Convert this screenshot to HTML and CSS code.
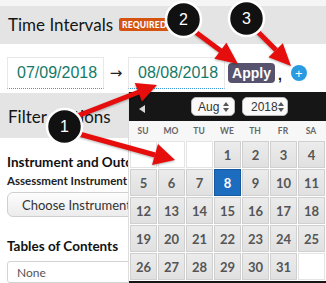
FILE: index.html
```html
<!DOCTYPE html>
<html lang="en">
<head>
  <meta charset="UTF-8" />
  <title>Time Intervals</title>
  <link rel="stylesheet" href="styles.css">
</head>
<body>
  <div class="page">
    <div class="strip"></div>

    <section class="panel">
      <h2 class="panel-title">Time Intervals <span class="badge">REQUIRED</span></h2>
      <div class="range">
        <div class="date">07/09/2018</div>
        <span class="to">&rarr;</span>
        <div class="date">08/08/2018</div>
        <button type="button" class="apply">Apply</button>
        <span class="comma">,</span>
        <span class="add">+</span>
      </div>
    </section>

    <section class="panel">
      <h2 class="panel-title filter-title">Filter Options</h2>
      <div class="filters">
        <h3>Instrument and Outcomes</h3>
        <label>Assessment Instrument</label>
        <button type="button" class="choose">Choose Instrument</button>
        <h3 class="toc">Tables of Contents</h3>
        <div class="select">None</div>
      </div>
    </section>

    <div class="datepicker">
      <div class="dp-head">
        <span class="dp-prev"></span>
        <span class="dp-select month">Aug <svg width="6" height="10" viewBox="0 0 6 10"><path d="M3 0 L6 4 H0 Z M0 6 H6 L3 10 Z" fill="#555"/></svg></span>
        <span class="dp-select year">2018 <svg width="6" height="10" viewBox="0 0 6 10"><path d="M3 0 L6 4 H0 Z M0 6 H6 L3 10 Z" fill="#555"/></svg></span>
      </div>
      <div class="dp-days">
        <span>SU</span><span>MO</span><span>TU</span><span>WE</span><span>TH</span><span>FR</span><span>SA</span>
      </div>
      <div class="dp-grid">
        <span class="empty"></span><span class="empty"></span><span class="empty"></span>
        <span>1</span><span>2</span><span>3</span><span>4</span>
        <span>5</span><span>6</span><span>7</span><span class="active">8</span><span>9</span><span>10</span><span>11</span>
        <span>12</span><span>13</span><span>14</span><span>15</span><span>16</span><span>17</span><span>18</span>
        <span>19</span><span>20</span><span>21</span><span>22</span><span>23</span><span>24</span><span>25</span>
        <span>26</span><span>27</span><span>28</span><span>29</span><span>30</span><span>31</span><span class="empty"></span>
      </div>
      <div class="dp-foot"></div>
    </div>

    <svg class="notes" width="326" height="283" viewBox="0 0 326 283">
      <g class="arrows">
        <line x1="72" y1="118" x2="139" y2="92" />
        <polygon points="142,101.5 157,85 134.8,82.9" />
        <line x1="72" y1="132" x2="155" y2="155" />
        <polygon points="152,165 175,160 158,144" />
        <line x1="190" y1="28" x2="221" y2="51" />
        <polygon points="214.4,58.8 238,64 226.4,42.8" />
        <line x1="252" y1="26" x2="276" y2="50" />
        <polygon points="268.5,57.2 291,66 282.8,43.2" />
      </g>
      <g class="marks">
        <circle cx="64.5" cy="126.5" r="17.5" />
        <text x="64.5" y="132">1</text>
        <circle cx="183.5" cy="19.5" r="17.5" />
        <text x="183.5" y="25">2</text>
        <circle cx="246.5" cy="18.5" r="17.5" />
        <text x="246.5" y="24">3</text>
      </g>
    </svg>
  </div>
</body>
</html>
```

FILE: styles.css
```css
* {
  box-sizing: border-box;
  margin: 0;
  padding: 0;
}

body {
  background-color: #fff;
  color: #111;
  font-family: 'Lato', sans-serif;
}

.page {
  position: relative;
  width: 326px;
  height: 283px;
  overflow: hidden;
}

.strip {
  height: 6px;
  background-color: #f5f5f5;
}

.panel-title {
  display: flex;
  align-items: center;
  height: 38px;
  padding: 0 8px 2px;
  background-color: #e4e4e4;
  font-size: 17px;
  font-weight: 400;
  color: #151515;
}

.filter-title {
  height: 45px;
  padding-top: 4px;
}

.badge {
  margin-left: 6px;
  padding: 2px 3px 1px;
  border-radius: 2px;
  background-color: #d4530f;
  color: #fff;
  font-size: 8.5px;
  font-weight: 900;
  letter-spacing: 0.2px;
}

.range {
  display: flex;
  align-items: center;
  height: 49px;
  padding: 13px 0 4px 7px;
}

.date {
  width: 97px;
  height: 32px;
  padding: 6px 0 0 9px;
  border: 1px solid #e8e8e8;
  border-bottom: 1px dotted #3c9ad8;
  font-family: 'Liberation Sans', sans-serif;
  font-size: 16px;
  color: #167a68;
}

.to {
  width: 24px;
  text-align: center;
  font-family: 'DejaVu Sans', sans-serif;
  font-size: 15px;
  color: #222;
}

.apply {
  margin-left: 3px;
  width: 47px;
  height: 20px;
  border: none;
  border-radius: 4px;
  background-color: #57536e;
  color: #fff;
  font-family: 'Liberation Sans', sans-serif;
  font-size: 14px;
  font-weight: 700;
}

.comma {
  margin: 4px 0 0 3px;
  font-family: 'Liberation Sans', sans-serif;
  font-weight: 700;
  font-size: 14px;
}

.add {
  display: flex;
  align-items: center;
  justify-content: center;
  width: 16px;
  height: 16px;
  margin-left: 9px;
  border-radius: 50%;
  background-color: #2b9be1;
  color: #fff;
  font-family: 'Liberation Sans', sans-serif;
  font-size: 13px;
  line-height: 1;
}

.filters {
  padding: 16px 7px 0;
}

.filters h3 {
  font-size: 13.5px;
  font-weight: 700;
  color: #111;
}

.filters label {
  display: block;
  margin-top: 4px;
  font-size: 11.5px;
  font-weight: 700;
  color: #222;
}

.choose {
  display: block;
  width: 170px;
  height: 25px;
  margin-top: 5px;
  padding-left: 14px;
  text-align: left;
  border: 1px solid #cfcfcf;
  border-radius: 6px;
  background: linear-gradient(#fdfdfd, #ececec);
  font-family: 'Lato', sans-serif;
  font-size: 13px;
  color: #333;
}

.toc {
  margin-top: 21px;
}

.select {
  height: 22px;
  margin-top: 7px;
  padding: 3px 9px;
  border: 1px solid #d3d3d3;
  border-radius: 3px;
  font-size: 12px;
  color: #555;
}

.datepicker {
  position: absolute;
  top: 92px;
  left: 128px;
  width: 198px;
  background-color: #fff;
  border-left: 1px solid #ddd;
}

.dp-head {
  display: flex;
  align-items: center;
  height: 29px;
  padding-left: 10px;
  background-color: #161616;
}

.dp-prev {
  width: 0;
  height: 0;
  border-top: 4px solid transparent;
  border-bottom: 4px solid transparent;
  border-right: 6px solid #d8d8d8;
  margin-top: 5px;
}

.dp-select {
  display: flex;
  align-items: center;
  justify-content: space-between;
  flex-shrink: 0;
  height: 19px;
  padding: 0 5px 0 6px;
  border-radius: 5px;
  background-color: #fafafa;
  border: 1px solid #bbb;
  font-family: 'Liberation Sans', sans-serif;
  font-size: 12px;
  color: #333;
}

.dp-select svg {
  flex-shrink: 0;
}

.month {
  margin-left: 46px;
  width: 44px;
}

.year {
  margin-left: 7px;
  width: 46px;
  padding-left: 8px;
}

.dp-days {
  display: grid;
  grid-template-columns: repeat(7, 28px);
  height: 20px;
  align-items: center;
  background-color: #f7f7f7;
  font-size: 8.5px;
  font-weight: 700;
  color: #666;
  text-align: center;
}

.dp-grid {
  display: grid;
  grid-template-columns: repeat(7, 27px);
  grid-auto-rows: 27px;
  gap: 1px;
  padding: 0 0 1px 1px;
  background-color: #fff;
}

.dp-grid span {
  display: flex;
  align-items: center;
  justify-content: center;
  border: 1px solid #d0d0d0;
  background: linear-gradient(#ececec, #e0e0e0);
  font-size: 13px;
  font-weight: 700;
  color: #555;
}

.dp-grid .empty {
  background: #fff;
  border-color: #e4e4e4;
}

.dp-grid .active {
  background: #1c6cc0;
  border-color: #14599f;
  color: #fff;
}

.dp-foot {
  height: 4px;
  background-color: #161616;
}

.notes {
  position: absolute;
  top: 0;
  left: 0;
  pointer-events: none;
}

.arrows {
  filter: drop-shadow(0 1px 1px rgba(0,0,0,0.3));
}

.arrows line {
  stroke: #e60d0d;
  stroke-width: 5;
}

.arrows polygon {
  fill: #e60d0d;
}

.marks circle {
  fill: #111;
  stroke: #fff;
  stroke-width: 2.5;
}

.marks text {
  fill: #fff;
  font-family: 'Liberation Sans', sans-serif;
  font-size: 16px;
  text-anchor: middle;
}
```
